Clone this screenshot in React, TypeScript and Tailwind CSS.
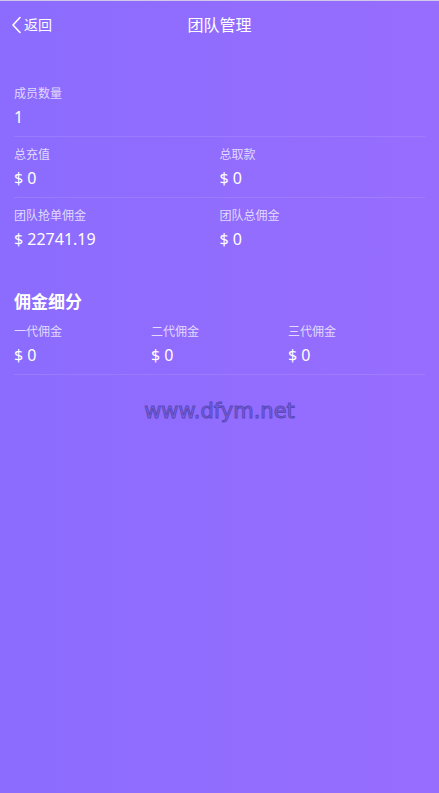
import React from "react";

const cjk = "font-['Noto_Sans','Noto_Sans_CJK_SC',sans-serif]";

function Stat({ label, value }: { label: string; value: string }) {
  return (
    <div>
      <div className="text-[12px] leading-[18px] text-white/75">{label}</div>
      <div className="mt-[2px] text-[16px] leading-[24px] text-white">{value}</div>
    </div>
  );
}

export default function App() {
  return (
    <div className={`min-h-[793px] bg-gradient-to-r from-[#8b6cfe] to-[#976dfe] border-t border-[#cfc8e8] ${cjk}`}>
      <header className="relative flex h-[47px] items-center px-[11px]">
        <button className="flex items-center text-white">
          <svg width="11" height="18" viewBox="0 0 11 18" fill="none" className="mr-[2px]">
            <path d="M9 1.5L2 9l7 7.5" stroke="white" strokeWidth="1.6" strokeLinecap="round" strokeLinejoin="round" />
          </svg>
          <span className="text-[14px] leading-[20px]">返回</span>
        </button>
        <h1 className="absolute left-1/2 -translate-x-1/2 text-[16px] leading-[22px] text-white">团队管理</h1>
      </header>

      <main className="px-[14px] pt-[28px]">
        <div className="pt-[9px] pb-[7px] border-b border-white/10">
          <Stat label="成员数量" value="1" />
        </div>
        <div className="grid grid-cols-2 pt-[9px] pb-[7px] border-b border-white/10">
          <Stat label="总充值" value="$ 0" />
          <Stat label="总取款" value="$ 0" />
        </div>
        <div className="grid grid-cols-2 pt-[9px] pb-[7px]">
          <Stat label="团队抢单佣金" value="$ 22741.19" />
          <Stat label="团队总佣金" value="$ 0" />
        </div>

        <h2 className="mt-[32px] text-[17px] leading-[24px] font-bold text-white">佣金细分</h2>
        <div className="grid grid-cols-3 pt-[9px] pb-[7px] border-b border-white/10">
          <Stat label="一代佣金" value="$ 0" />
          <Stat label="二代佣金" value="$ 0" />
          <Stat label="三代佣金" value="$ 0" />
        </div>

        <div className="mt-[22px] flex justify-center">
          <span className="font-['DejaVu_Sans',sans-serif] text-[21px] leading-[28px] text-[#7b62e6] [-webkit-text-stroke:1px_#5b49b9]">
            www.dfym.net
          </span>
        </div>
      </main>
    </div>
  );
}
